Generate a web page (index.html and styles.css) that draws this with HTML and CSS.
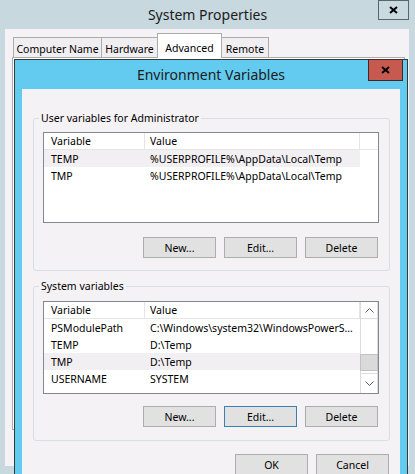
FILE: index.html
```html
<!DOCTYPE html>
<html lang="en">
<head>
<meta charset="utf-8">
<title>Environment Variables</title>
<link rel="stylesheet" href="styles.css">
</head>
<body>
<div class="sysprops">
  <div class="titlebar">
    <span class="title">System Properties</span>
    <div class="close close-sys">
      <svg width="9" height="8" viewBox="0 0 9 8"><path d="M1 1 L8 7 M8 1 L1 7" stroke="#000" stroke-width="2" fill="none"/></svg>
    </div>
  </div>
  <div class="sys-body">
    <div class="tabs">
      <div class="tab tab-cn">Computer Name</div>
      <div class="tab tab-hw">Hardware</div>
      <div class="tab tab-adv active">Advanced</div>
      <div class="tab tab-rem">Remote</div>
    </div>
    <div class="tab-panel"></div>
  </div>
</div>

<div class="envvars">
  <div class="env-titlebar">
    <span class="title">Environment Variables</span>
  </div>
  <div class="close env-close">
    <svg width="9" height="8" viewBox="0 0 9 8"><path d="M1 1 L8 7 M8 1 L1 7" stroke="#000" stroke-width="2" fill="none"/></svg>
  </div>
  <div class="env-body">
    <fieldset class="group group-user">
      <legend>User variables for Administrator</legend>
      <div class="list list-user">
        <div class="list-main">
          <div class="row head"><span class="c1">Variable</span><span class="c2">Value</span></div>
          <div class="row hl"><span class="c1">TEMP</span><span class="c2">%USERPROFILE%\AppData\Local\Temp</span></div>
          <div class="row"><span class="c1">TMP</span><span class="c2">%USERPROFILE%\AppData\Local\Temp</span></div>
        </div>
      </div>
      <div class="btn-row">
        <button class="btn">New...</button>
        <button class="btn">Edit...</button>
        <button class="btn">Delete</button>
      </div>
    </fieldset>

    <fieldset class="group group-sys">
      <legend>System variables</legend>
      <div class="list list-sys">
        <div class="list-main">
          <div class="row head"><span class="c1">Variable</span><span class="c2">Value</span></div>
          <div class="row"><span class="c1">PSModulePath</span><span class="c2">C:\Windows\system32\WindowsPowerS…</span></div>
          <div class="row"><span class="c1">TEMP</span><span class="c2">D:\Temp</span></div>
          <div class="row hl"><span class="c1">TMP</span><span class="c2">D:\Temp</span></div>
          <div class="row"><span class="c1">USERNAME</span><span class="c2">SYSTEM</span></div>
        </div>
        <div class="scrollbar">
          <div class="sb-btn sb-up">
            <svg width="9" height="5" viewBox="0 0 9 5"><polyline points="0.5,4.5 4.5,0.5 8.5,4.5" fill="none" stroke="#606060" stroke-width="1"/></svg>
          </div>
          <div class="sb-track"><div class="sb-thumb"></div></div>
          <div class="sb-btn sb-down">
            <svg width="9" height="5" viewBox="0 0 9 5"><polyline points="0.5,0.5 4.5,4.5 8.5,0.5" fill="none" stroke="#606060" stroke-width="1"/></svg>
          </div>
        </div>
      </div>
      <div class="btn-row btn-row-sys">
        <button class="btn">New...</button>
        <button class="btn focus">Edit...</button>
        <button class="btn">Delete</button>
      </div>
    </fieldset>

    <div class="dlg-buttons">
      <button class="btn">OK</button>
      <button class="btn">Cancel</button>
    </div>
  </div>
</div>
</body>
</html>
```

FILE: styles.css
```css
* { box-sizing: border-box; }
html, body { margin: 0; padding: 0; }
body {
  width: 415px;
  height: 474px;
  overflow: hidden;
  position: relative;
  background: #c7d8df;
  font-family: "Segoe UI", "Noto Sans", sans-serif;
  font-size: 10.5px;
  color: #000;
}

/* System Properties window (background) */
.sysprops { width: 415px; }
.titlebar {
  height: 29px;
  display: flex;
  align-items: center;
  justify-content: center;
  position: relative;
}
.title { font-size: 14px; color: #1b1b1b; }
.close {
  display: flex;
  align-items: center;
  justify-content: center;
}
.close-sys {
  position: absolute;
  top: 0;
  right: 6px;
  width: 31px;
  height: 20px;
  border: 1px solid #5b6569;
  background: #c9dae1;
}
.sys-body {
  margin: 0 6px 0 5px;
  height: 437px;
  background: #f5f2f5;
  padding: 4px 4px 0 7px;
}
.tabs {
  display: flex;
  align-items: flex-end;
  height: 24px;
  padding-left: 1px;
  position: relative;
  z-index: 1;
}
.tab {
  height: 20px;
  border: 1px solid #acacac;
  border-bottom: 0;
  background: #f0eef0;
  display: flex;
  align-items: center;
  justify-content: center;
  padding-top: 2px;
  margin-left: -1px;
  font-size: 10.5px;
  white-space: nowrap;
}
.tab-cn { width: 89px; margin-left: 0; }
.tab-hw { width: 57px; }
.tab-adv { width: 65px; }
.tab-rem { width: 48px; }
.tab.active {
  height: 25px;
  margin-bottom: -1px;
  background: #fff;
  padding-top: 3px;
  position: relative;
  z-index: 1;
}
.tab-panel {
  height: 373px;
  border: 1px solid #acacac;
  background: #fff;
}

/* Environment Variables window (on top) */
.envvars {
  position: absolute;
  left: 14px;
  top: 59px;
  width: 394px;
  height: 420px;
  border: 1px solid #383838;
  background: #63cbef;
  padding: 0 7px;
  display: flex;
  flex-direction: column;
}
.env-titlebar {
  height: 29px;
  flex: none;
  display: flex;
  align-items: center;
  justify-content: center;
}
.env-close {
  position: absolute;
  top: -1px;
  right: 4px;
  width: 35px;
  height: 22px;
  background: #c75a50;
  border: 1px solid #3e2b29;
}
.env-body {
  flex: 1;
  background: #f5f2f5;
  display: flex;
  flex-direction: column;
}

/* Group boxes */
.group {
  margin: 0 10px 0 11px;
  padding: 0 10px 12px 9px;
  border: 1px solid #d6dfe5;
  border-radius: 3px;
  min-inline-size: 0;
}
.group legend {
  padding: 0 2px;
  margin-left: -4px;
  line-height: 16px;
  color: #000;
}
.group-user { margin-top: 21px; }
.group-sys { margin-top: 7px; padding-bottom: 13px; }

/* List views */
.list {
  display: flex;
  height: 91px;
  margin-top: 6px;
  border: 1px solid #828790;
  background: #fff;
  overflow: hidden;
}
.list-sys { height: 93px; margin-top: 7px; }
.list-main { flex: 1; min-width: 0; }
.row {
  display: flex;
  width: 316px;
  height: 17px;
  align-items: center;
  white-space: nowrap;
}
.row.hl { background: #f2eff2; }
.row.head {
  width: auto;
  border-bottom: 1px solid #e5e5e5;
  align-items: stretch;
}
.c1 { width: 101px; flex: none; padding-left: 7px; overflow: hidden; }
.c2 { width: 215px; flex: none; padding-left: 5px; overflow: hidden; }
.head .c1, .head .c2 {
  display: flex;
  align-items: center;
  border-right: 1px solid #e5e5e5;
}

/* Scrollbar */
.scrollbar {
  width: 18px;
  flex: none;
  display: flex;
  flex-direction: column;
  border-left: 1px solid #dcdcdc;
  border-right: 1px solid #dcdcdc;
  background: #fff;
}
.sb-btn {
  display: flex;
  align-items: center;
  justify-content: center;
  flex: none;
}
.sb-up { height: 17px; border-bottom: 1px solid #dcdcdc; }
.sb-down { height: 20px; border-top: 1px solid #dcdcdc; }
.sb-track { flex: 1; padding-top: 35px; }
.sb-thumb {
  height: 17px;
  margin: 0 -1px;
  background: #dadada;
  border: 1px solid #c2c2c2;
}

/* Buttons */
.btn-row {
  display: flex;
  justify-content: flex-end;
  gap: 8px;
  margin-top: 14px;
  margin-right: 1px;
}
.btn-row-sys { margin-top: 12px; }
.btn {
  width: 73px;
  height: 21px;
  padding: 0;
  border: 1px solid #adadad;
  background: #e1e1e1;
  font: inherit;
  color: #000;
  display: flex;
  align-items: center;
  justify-content: center;
}
.btn.focus { border-color: #3c7fb1; }
.dlg-buttons {
  display: flex;
  justify-content: flex-end;
  gap: 8px;
  margin-top: 13px;
  padding-right: 11px;
}
```
